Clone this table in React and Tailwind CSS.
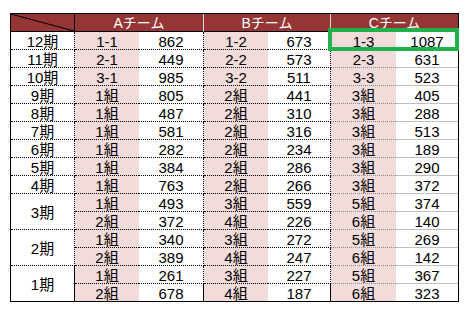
const teams = ["Aチーム", "Bチーム", "Cチーム"];

const rows = [
  { period: "12期", cells: [["1-1", 862], ["1-2", 673], ["1-3", 1087]] },
  { period: "11期", cells: [["2-1", 449], ["2-2", 573], ["2-3", 631]] },
  { period: "10期", cells: [["3-1", 985], ["3-2", 511], ["3-3", 523]] },
  { period: "9期", cells: [["1組", 805], ["2組", 441], ["3組", 405]] },
  { period: "8期", cells: [["1組", 487], ["2組", 310], ["3組", 288]] },
  { period: "7期", cells: [["1組", 581], ["2組", 316], ["3組", 513]] },
  { period: "6期", cells: [["1組", 282], ["2組", 234], ["3組", 189]] },
  { period: "5期", cells: [["1組", 384], ["2組", 286], ["3組", 290]] },
  { period: "4期", cells: [["1組", 763], ["2組", 266], ["3組", 372]] },
  { period: "3期", span: true, cells: [["1組", 493], ["3組", 559], ["5組", 374]] },
  { period: null, cells: [["2組", 372], ["4組", 226], ["6組", 140]] },
  { period: "2期", span: true, cells: [["1組", 340], ["3組", 272], ["5組", 269]] },
  { period: null, cells: [["2組", 389], ["4組", 247], ["6組", 142]] },
  { period: "1期", span: true, cells: [["1組", 261], ["3組", 227], ["5組", 367]] },
  { period: null, cells: [["2組", 678], ["4組", 187], ["6組", 323]] },
];

const font = { fontFamily: '"Liberation Sans", "Noto Sans CJK JP", sans-serif' };

export default function App() {
  return (
    <div className="w-[468px] h-[315px] bg-white pt-[13px] pl-[10px]" style={font}>
      <div className="relative w-fit border-l border-t border-r border-black">
        <div className="grid grid-cols-[64px_64px_65px_64px_63px_65px_62px] auto-rows-[18px] text-[15px] text-black">
          {/* header */}
          <div className="bg-[#963634] border-r border-b border-black">
            <svg width="63" height="17" className="block">
              <line x1="0" y1="0" x2="63" y2="17" stroke="#000" strokeWidth="1" />
            </svg>
          </div>
          {teams.map((t, i) => (
            <div
              key={t}
              className={`col-span-2 bg-[#963634] border-b border-b-black text-white text-[14px] flex items-center justify-center leading-none ${
                i < 2 ? "border-r border-r-[#d9d9d9]" : ""
              }`}
            >
              {t}
            </div>
          ))}

          {rows.map((r, ri) => {
            const last = ri === rows.length - 1;
            const line = last ? "border-b border-solid border-b-black" : "border-b border-dotted border-b-black";
            const lineC = last ? "border-b border-solid border-b-black" : "border-b border-dotted border-b-[#8c8c8c]";
            const lineCv = last ? "border-b border-solid border-b-black" : "border-b border-solid border-b-[#c0c0c0]";
            const periodLast = ri >= rows.length - 2;
            return [
              r.period !== null && (
                <div
                  key={`p${ri}`}
                  className={`border-r border-r-black flex items-center justify-center leading-none pt-[2px] ${
                    r.span ? "row-span-2" : ""
                  } ${periodLast ? "border-b border-b-black" : "border-b border-dotted border-b-black"}`}
                >
                  {r.period}
                </div>
              ),
              ...r.cells.map(([label, val], ci) => [
                <div
                  key={`l${ri}-${ci}`}
                  className={`bg-[#f2dcdb] flex items-center justify-center leading-none pt-[2px] ${ci === 2 ? lineC : line}`}
                >
                  {label}
                </div>,
                <div
                  key={`v${ri}-${ci}`}
                  className={`flex items-center justify-center leading-none pt-[2px] ${ci === 2 ? lineCv : line} ${
                    ci < 2 ? "border-r border-r-black" : ""
                  }`}
                >
                  {val}
                </div>,
              ]),
            ];
          })}
        </div>
        <div className="absolute left-[317px] top-[14px] w-[131px] h-[23px] border-4 border-[#21b14b] pointer-events-none" />
      </div>
    </div>
  );
}
